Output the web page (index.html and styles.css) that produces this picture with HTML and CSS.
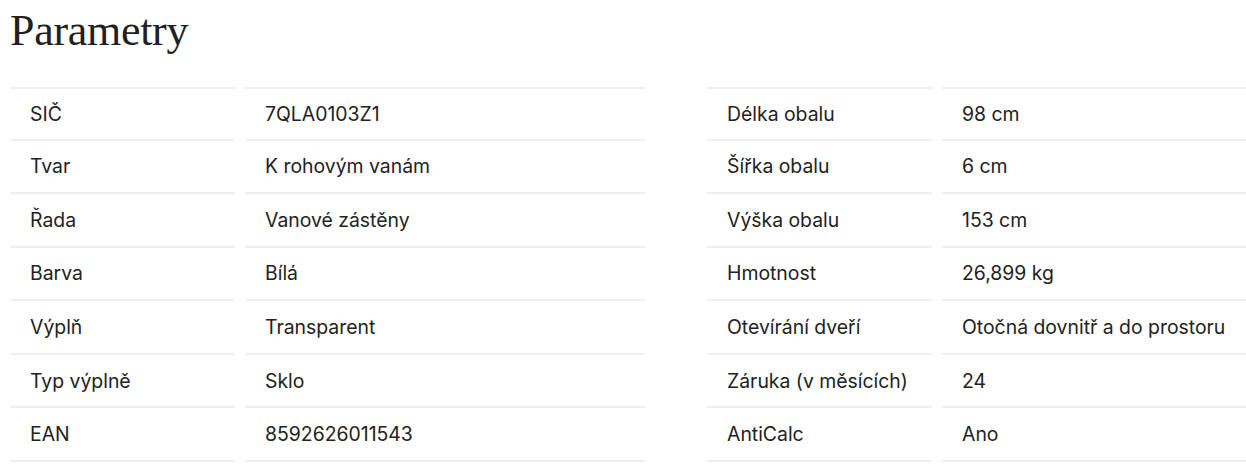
FILE: index.html
```html
<!DOCTYPE html>
<html lang="cs">
<head>
<meta charset="utf-8">
<title>Parametry</title>
<link rel="stylesheet" href="styles.css">
</head>
<body>
<section class="params">
  <h2 class="params-title">Parametry</h2>
  <div class="params-tables">
    <dl class="ptable ptable-left">
      <dt>SIČ</dt><dd>7QLA0103Z1</dd>
      <dt>Tvar</dt><dd>K rohovým vanám</dd>
      <dt>Řada</dt><dd>Vanové zástěny</dd>
      <dt>Barva</dt><dd>Bílá</dd>
      <dt>Výplň</dt><dd>Transparent</dd>
      <dt>Typ výplně</dt><dd>Sklo</dd>
      <dt>EAN</dt><dd>8592626011543</dd>
    </dl>
    <dl class="ptable ptable-right">
      <dt>Délka obalu</dt><dd>98 cm</dd>
      <dt>Šířka obalu</dt><dd>6 cm</dd>
      <dt>Výška obalu</dt><dd>153 cm</dd>
      <dt>Hmotnost</dt><dd>26,899 kg</dd>
      <dt>Otevírání dveří</dt><dd>Otočná dovnitř a do prostoru</dd>
      <dt>Záruka (v měsících)</dt><dd>24</dd>
      <dt>AntiCalc</dt><dd>Ano</dd>
    </dl>
  </div>
</section>
</body>
</html>
```

FILE: styles.css
```css
html, body {
  margin: 0;
  padding: 0;
  background: #ffffff;
}
body {
  overflow: hidden;
  font-family: Inter, "Liberation Sans", Arial, sans-serif;
  color: #222222;
}
.params {
  padding: 0 0 0 10px;
}
.params-title {
  margin: 0;
  padding-top: 5px;
  height: 87px;
  box-sizing: border-box;
  font-family: "Liberation Serif", "Times New Roman", serif;
  font-weight: 400;
  font-size: 44px;
  line-height: 52px;
  letter-spacing: -0.3px;
  color: #231f20;
}
.params-tables {
  display: grid;
  grid-template-columns: 635px 1fr;
  column-gap: 62px;
}
.ptable {
  margin: 0;
  display: grid;
  grid-template-columns: 225px 1fr;
  column-gap: 10px;
}
.ptable-left {
  grid-template-columns: 225px 400px;
}
.ptable dt,
.ptable dd {
  margin: 0;
  height: 53.57px;
  box-sizing: border-box;
  display: flex;
  align-items: center;
  padding: 0 20px;
  font-size: 19.4px;
  border-bottom: 2px solid #efefef;
  white-space: nowrap;
}
.ptable dt:first-of-type,
.ptable dd:first-of-type {
  border-top: 2px solid #efefef;
}
```
